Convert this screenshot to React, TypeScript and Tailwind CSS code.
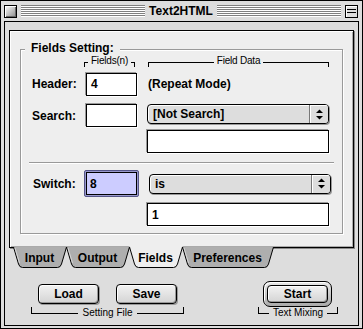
import React from "react";

const stripes =
  "bg-[repeating-linear-gradient(to_bottom,#808080_0px,#808080_1px,#ffffff_1px,#ffffff_2px)]";

function Arrows() {
  return (
    <svg width="7" height="11" viewBox="0 0 7 11">
      <polygon points="0,4 3.5,0.5 7,4" fill="#000" />
      <polygon points="0,7 7,7 3.5,10.5" fill="#000" />
    </svg>
  );
}

function Popup({ label }: { label: string }) {
  return (
    <div className="w-[182px] h-[20px] flex border border-black rounded-[4px] bg-[#dddddd] shadow-[inset_1px_1px_0_#ffffff,1px_1px_0_#999999] overflow-hidden">
      <div className="flex-1 flex items-center pl-[5px] text-[12px] font-bold leading-none">
        {label}
      </div>
      <div className="w-[19px] flex items-center justify-center border-l border-[#777777] bg-[#dddddd] shadow-[inset_1px_1px_0_#ffffff]">
        <Arrows />
      </div>
    </div>
  );
}

function Field({ value, w }: { value?: string; w: string }) {
  return (
    <div
      className={`${w} h-[23px] bg-white border border-black shadow-[-1px_-1px_0_#999999,1px_1px_0_#ffffff] flex items-center pl-[4px] text-[12px] font-bold leading-none`}
    >
      {value}
    </div>
  );
}

function Button({ label }: { label: string }) {
  return (
    <div className="w-[61px] h-[20px] border border-black rounded-[4px] bg-[linear-gradient(to_bottom,#f2f2f2,#d4d4d4)] shadow-[inset_1px_1px_0_#ffffff,inset_-1px_-1px_0_#999999,1px_1px_0_#999999] flex items-center justify-center text-[12px] font-bold leading-none">
      {label}
    </div>
  );
}

function TopBracket({ label, className }: { label: string; className: string }) {
  return (
    <div className={`${className} h-[12px] flex items-center`}>
      <div className="flex-1 h-[5px] self-end border-t border-l border-black" />
      <div className="px-[3px] text-[10px] leading-none tracking-[-0.2px]">{label}</div>
      <div className="flex-1 h-[5px] self-end border-t border-r border-black" />
    </div>
  );
}

function BottomBracket({ label }: { label: string }) {
  return (
    <div className="h-[12px] flex items-center">
      <div className="flex-1 h-[7px] self-start border-b border-l border-black" />
      <div className="px-[4px] text-[10px] leading-none">{label}</div>
      <div className="flex-1 h-[7px] self-start border-b border-r border-black" />
    </div>
  );
}

function tabPath(xl: number, xr: number) {
  const a = xl + 0.5;
  const b = xr + 0.5;
  return `M ${a} 0 L ${a + 5} 17 Q ${a + 6} 20.5 ${a + 9} 20.5 L ${b - 9} 20.5 Q ${b - 6} 20.5 ${b - 5} 17 L ${b} 0`;
}

function Tabs() {
  // page coords: container starts at x=5, y=247
  const tabs = [
    { l: 8, r: 61, label: "Input", sel: false },
    { l: 61, r: 124, label: "Output", sel: false },
    { l: 177, r: 268, label: "Preferences", sel: false },
  ];
  const sel = { l: 124, r: 177 };
  return (
    <div className="relative h-[22px] -mt-px shrink-0">
      <svg className="absolute inset-0 overflow-visible" width="353" height="22">
        {tabs.map((t) => (
          <g key={t.label}>
            <path d={tabPath(t.l, t.r)} fill="#aeaeae" stroke="#000" strokeWidth="1" />
            <path
              d={`M ${t.l + 2} 1 L ${t.l + 6.5} 16`}
              stroke="#d6d6d6"
              strokeWidth="1"
              fill="none"
            />
          </g>
        ))}
        <path
          d={`M ${sel.l + 0.5} -2 L ${sel.l + 0.5} 0 L ${sel.l + 5.5} 17 Q ${sel.l + 6.5} 20.5 ${sel.l + 9.5} 20.5 L ${sel.r - 8.5} 20.5 Q ${sel.r - 5.5} 20.5 ${sel.r - 4.5} 17 L ${sel.r + 0.5} 0 L ${sel.r + 0.5} -2 Z`}
          fill="#eeeeee"
          stroke="none"
        />
        <path d={tabPath(sel.l, sel.r)} fill="none" stroke="#000" strokeWidth="1" />
      </svg>
      <div className="relative flex h-[21px] items-center pl-[8px] text-[12px] font-bold leading-none">
        <div className="w-[53px] text-center">Input</div>
        <div className="w-[63px] text-center">Output</div>
        <div className="w-[53px] text-center">Fields</div>
        <div className="w-[91px] text-center">Preferences</div>
      </div>
    </div>
  );
}

export default function App() {
  return (
    <div className="w-[363px] h-[329px] bg-[#dddddd] border border-black flex flex-col font-['Liberation_Sans',Arial,sans-serif] text-black select-none">
      {/* Title bar */}
      <div className="h-[20px] shrink-0 flex items-center pl-[3px] pr-[4px]">
        <div className="w-[13px] h-[13px] border border-black bg-[linear-gradient(135deg,#ffffff,#8a8a8a)] shadow-[inset_1px_1px_0_#ffffff,inset_-1px_-1px_0_#666666]" />
        <div className={`flex-1 h-[12px] ml-[4px] ${stripes}`} />
        <div className="px-[4px] text-[12px] font-bold leading-none">Text2HTML</div>
        <div className={`flex-1 h-[12px] mr-[4px] ${stripes}`} />
        <div className="w-[13px] h-[13px] border border-black bg-[#dddddd] shadow-[inset_1px_1px_0_#ffffff] flex flex-col justify-center gap-[2px] px-[1px]">
          <div className="h-px bg-black" />
          <div className="h-px bg-black" />
        </div>
      </div>

      {/* Content frame */}
      <div className="flex-1 mx-[3px] mb-[2px] border border-black flex flex-col">
        {/* Tab panel */}
        <div className="mx-[4px] mt-[8px] h-[218px] shrink-0 border border-black bg-[#eeeeee] shadow-[inset_1px_1px_0_#ffffff,inset_-1px_-1px_0_#aaaaaa,1px_1px_0_#888888] flex flex-col">
          {/* Group box */}
          <div className="mx-[10px] mt-[18px] border border-[#999999] shadow-[inset_1px_1px_0_#ffffff,1px_1px_0_#ffffff] flex flex-col pb-[7px]">
            <div className="-mt-[9px] h-[14px] ml-[4px] self-start px-[6px] bg-[#eeeeee] flex items-center text-[12px] font-bold leading-none">
              Fields Setting:
            </div>

            {/* column labels */}
            <div className="flex pl-[11px]">
              <div className="w-[52px]" />
              <TopBracket label="Fields(n)" className="w-[51px]" />
              <div className="w-[13px]" />
              <TopBracket label="Field Data" className="w-[181px]" />
            </div>

            {/* Header */}
            <div className="flex items-center pl-[11px] mt-[5px] h-[24px]">
              <div className="w-[54px] text-[12px] font-bold leading-none">Header:</div>
              <Field value="4" w="w-[51px]" />
              <div className="w-[10px]" />
              <div className="text-[12px] font-bold leading-none pl-[1px]">(Repeat Mode)</div>
            </div>

            {/* Search */}
            <div className="flex items-start pl-[11px] mt-[8px] h-[24px]">
              <div className="w-[54px] h-[23px] flex items-center text-[12px] font-bold leading-none">
                Search:
              </div>
              <Field w="w-[51px]" />
              <div className="w-[10px]" />
              <Popup label="[Not Search]" />
            </div>
            <div className="flex pl-[126px] mt-[2px]">
              <Field w="w-[182px]" />
            </div>

            {/* separator */}
            <div className="mx-[8px] mt-[9px] h-[2px] border-t border-[#999999] border-b border-b-white" />

            {/* Switch */}
            <div className="flex items-center pl-[11px] mt-[6px] h-[27px]">
              <div className="w-[52px] text-[12px] font-bold leading-none pl-[1px]">Switch:</div>
              <div className="w-[55px] h-[27px] p-[1px] rounded-[2px] bg-[#9999cc] border border-[#555588]">
                <div className="w-full h-full bg-[#ccccff] border border-black flex items-center pl-[3px] text-[12px] font-bold leading-none">
                  8
                </div>
              </div>
              <div className="w-[10px]" />
              <Popup label="is" />
            </div>
            <div className="flex pl-[126px] mt-[6px]">
              <Field value="1" w="w-[182px]" />
            </div>
          </div>
        </div>

        <Tabs />

        {/* Bottom buttons */}
        <div className="flex mt-[12px] pl-[26px]">
          <div className="w-[153px] flex flex-col">
            <div className="h-[26px] flex items-center pl-[7px] gap-[17px]">
              <Button label="Load" />
              <Button label="Save" />
            </div>
            <BottomBracket label="Setting File" />
          </div>
          <div className="w-[80px] ml-[74px] flex flex-col">
            <div className="h-[26px] flex items-center pl-[5px]">
              <div className="w-[69px] h-[26px] rounded-[7px] border border-black bg-[linear-gradient(to_bottom,#e8e8e8,#aaaaaa)] p-[3px] shadow-[inset_1px_1px_0_#ffffff]">
                <div className="w-full h-full rounded-[4px] border border-black bg-[linear-gradient(to_bottom,#f2f2f2,#d4d4d4)] shadow-[inset_1px_1px_0_#ffffff,inset_-1px_-1px_0_#999999] flex items-center justify-center text-[12px] font-bold leading-none">
                  Start
                </div>
              </div>
            </div>
            <BottomBracket label="Text Mixing" />
          </div>
        </div>
      </div>
    </div>
  );
}
